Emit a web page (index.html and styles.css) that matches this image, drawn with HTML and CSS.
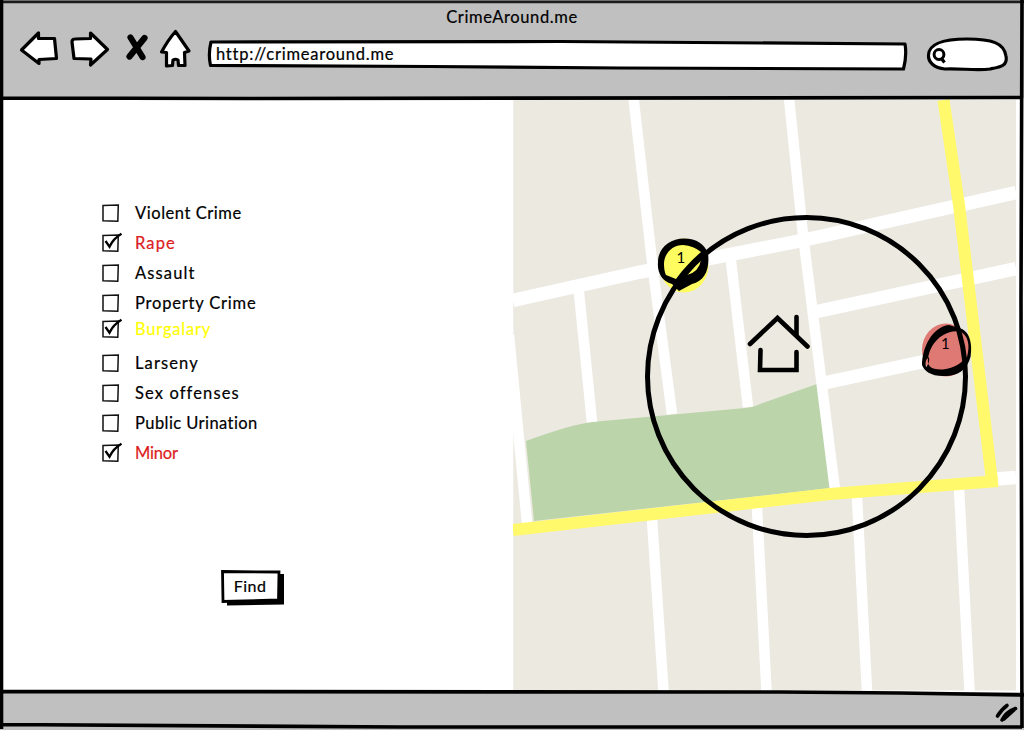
FILE: index.html
```html
<!DOCTYPE html>
<html lang="en">
<head>
<meta charset="utf-8">
<title>CrimeAround.me</title>
<link rel="stylesheet" href="styles.css">
</head>
<body>
<div class="window">
  <header class="header">
    <h1 class="title">CrimeAround.me</h1>
    <nav class="toolbar">
      <svg class="ink back" viewBox="19 29 41 40"><path d="M21.500 50 38.500 33 38.500 38.500 54.500 38.500 56.500 58.500 39 59.500 39 63.500Z"/></svg>
      <svg class="ink forward" viewBox="69 29 41 40"><path d="M72 42Q72 39 75 39L90.500 38.500 90.500 33 107.500 49.500 90.500 65 91 59 74 58.500Z"/></svg>
      <svg class="stop" viewBox="125 31 25 32"><path d="M130.500 37.500 142.500 57M144.500 38 129.500 56.500"/></svg>
      <svg class="ink home" viewBox="158 28 35 42"><path d="M175.500 31.500 189 51 184.500 52.500 185 65.500 178.500 65.500 178 60Q175.500 58.500 173 60L172.500 65.500 166.500 66 166.500 52.500 161.500 52Q168 40 175.500 31.500Z"/></svg>
      <div class="address">
        <svg class="ink address-shape" viewBox="205 38 704 34"><path d="M211 42 560 41.500 905 44Q907 55 903.500 69L620 68 430 66.500 210.500 65.500Q208 54 211 42Z"/></svg>
        <span class="url">http://crimearound.me</span>
      </div>
      <svg class="ink search" viewBox="925 36 85 37"><path d="M928.500 55C929 43 945 39 967 39C992 39 1004 43 1006 56C1008 66 1000 67 990 69C977 71 958 68 945 69C934 68 928 62 928.500 55Z"/><circle class="lens" cx="939" cy="54.500" r="4.900"/><path class="handle" d="M941 58 944.500 62.500"/></svg>
    </nav>
  </header>

  <main class="main">
    <form class="filters">
      <svg width="0" height="0" class="defs">
        <symbol id="box" viewBox="0 0 22 22"><path class="box-line" d="M2 3.500 17.300 3 16.800 19.300 2 18.700Z"/></symbol>
        <symbol id="checked" viewBox="0 0 22 22"><path class="box-line" d="M2 3.500 17.300 3 16.800 19.300 2 18.700Z"/><path class="tick" d="M4.500 9 8.500 14.700C11 9.500 15 5 20.500 1.800"/></symbol>
      </svg>
      <ul class="list">
        <li class="row"><svg class="check"><use href="#box"/></svg><span class="label">Violent Crime</span></li>
        <li class="row red"><svg class="check"><use href="#checked"/></svg><span class="label wide">Rape</span></li>
        <li class="row"><svg class="check"><use href="#box"/></svg><span class="label wide">Assault</span></li>
        <li class="row"><svg class="check"><use href="#box"/></svg><span class="label medium">Property Crime</span></li>
        <li class="row yellow"><svg class="check"><use href="#checked"/></svg><span class="label medium">Burgalary</span></li>
        <li class="row"><svg class="check"><use href="#box"/></svg><span class="label wide">Larseny</span></li>
        <li class="row"><svg class="check"><use href="#box"/></svg><span class="label wide">Sex offenses</span></li>
        <li class="row"><svg class="check"><use href="#box"/></svg><span class="label snug">Public Urination</span></li>
        <li class="row red"><svg class="check"><use href="#checked"/></svg><span class="label tight">Minor</span></li>
      </ul>
      <button class="find" type="button">
        <svg class="find-shape" viewBox="219 568 67 39"><path d="M227 574H284V604.500L227 605.500Z"/><path class="face" d="M222.500 571.500 279 572 278.500 600 223 601.500Z"/></svg>
        <span class="find-text">Find</span>
      </button>
    </form>

    <svg class="map" viewBox="513 98 504 594">
      <path class="land" d="M513.300 100H1016V690.500H513.300Z"/>
      <path class="park" d="M526 441C546 434 570 425 592 422L745 408Q754 407 760 404L817 384 831 488 534 521Z"/>
      <g class="roads">
        <path d="M513 300.500 640 272 800 241 1016 192.500"/>
        <path d="M817 311.500 1016 268.500"/>
        <path d="M824 383 940 358"/>
        <path d="M633.500 98 653 270 672 414"/>
        <path d="M789 98 803 235 835 490"/>
        <path d="M578.500 288 592 422"/>
        <path d="M730.500 257 748 407"/>
        <path d="M509 335 527 523"/>
        <path d="M652 520 663.500 691"/>
        <path d="M757 508 766.500 691"/>
        <path d="M857 498 867 691"/>
        <path d="M959 488 969.500 691"/>
        <path class="spur" d="M996 479 1016 477.500"/>
      </g>
      <path class="right-edge" d="M1016 98H1017V692H1016Z"/>
      <path class="highway" d="M943.500 100 959 205 992 481M513 530 830 494 998 481"/>
      <ellipse class="yellow-spot" cx="684" cy="265.500" rx="24.500" ry="27"/>
      <ellipse class="red-spot" cx="946" cy="350" rx="24" ry="26.500"/>
      <path class="pin" d="M684 238.500C697 238.500 704 244 708 253C710 269 705 281 692 284L679 291 672 284C661 281 657 271 658 262C658 248 670 238.500 684 238.500ZM683 245C672 245 664 254 664 264Q664 271 666 275L676 279C684 268 692 260 701 252Q694 246 683 245ZM701 260Q690 266 687 275Q699 272 701 260Z"/>
      <path class="pin" d="M922 365C922 348 932 327 949 325L959 328C969 330 973 343 970.500 357C967 370 957 376 946 376C932 377 924 371 922 365ZM928 359C927 366 931 370 943 369.500C955 368 961 363 967 357C970 346 969 335 959 331C941 331 930 344 928 359ZM925.500 363Q926 359 929 357Q930 363 926 367Z"/>
      <circle class="radius" cx="806.500" cy="376.500" r="159"/>
      <g class="house">
        <path d="M750 344 777.500 318 807.500 346.500"/>
        <path d="M796.500 317V335"/>
        <path d="M760.500 350 760 370H796.500V352"/>
      </g>
      <text class="count" x="676.500" y="263">1</text>
      <text class="count" x="941" y="348.500">1</text>
    </svg>
  </main>

  <footer class="footer">
    <svg class="grip" viewBox="994 701 26 22"><path d="M997.500 716Q1002 709 1007 705.500M1002 720Q1006 712 1015.500 708.500M1004 719 1014 710"/></svg>
  </footer>
  <svg class="frame" viewBox="0 0 1024 730">
    <path class="top" d="M0 1.800H1024"/>
    <path d="M1.500 0V729M2 98 250 98.500 1022 97.500M2 691.500 780 692 900 693 1024 695M2 724.500 400 727 1022 727"/>
    <path d="M1022 0 1021 300 1022 728"/>
  </svg>
</div>
</body>
</html>
```
FILE: styles.css
```css
* { box-sizing: border-box; }
body { margin: 0; background: #fff; color: #000; font-family: Lato, "Open Sans", sans-serif; }
.window { position: relative; width: 1024px; height: 730px; display: flex; flex-direction: column; overflow: hidden; }
.frame { position: absolute; inset: 0; width: 1024px; height: 730px; pointer-events: none; }
.frame path { fill: none; stroke: #000; stroke-width: 3.6; }
.frame .top { stroke: #1c1c1c; stroke-width: 2.8; }

.header { height: 98px; background: #c0c0c0; display: flex; flex-direction: column; }
.title { margin: 0; height: 28px; padding-top: 7px; text-align: center; font-size: 16.5px; line-height: 21px; font-weight: 400; letter-spacing: 0.6px; -webkit-text-stroke: 0.2px; }
.toolbar { display: flex; align-items: flex-start; padding-left: 19px; }
.toolbar svg { display: block; flex: none; }
.ink path { fill: #fff; stroke: #000; stroke-width: 3.2; stroke-linejoin: round; }
.back { width: 41px; height: 40px; margin-top: 1px; }
.forward { width: 41px; height: 40px; margin: 1px 0 0 9px; }
.stop { width: 25px; height: 32px; margin: 3px 0 0 15px; }
.stop path { fill: none; stroke: #000; stroke-width: 6.2; stroke-linecap: round; }
.home { width: 35px; height: 42px; margin-left: 8px; }
.address { position: relative; width: 704px; height: 34px; margin: 10px 0 0 12px; padding: 6px 0 0 11px; }
.address-shape { position: absolute; inset: 0; width: 704px; height: 34px; }
.url { position: relative; display: block; font-size: 16.5px; line-height: 21px; letter-spacing: 0.78px; -webkit-text-stroke: 0.2px; }
.search { width: 85px; height: 37px; margin: 8px 0 0 16px; }
.search .lens { fill: none; stroke: #000; stroke-width: 3; }
.search .handle { stroke-width: 3.2; }

.main { height: 594px; display: grid; grid-template-columns: 513px 504px; }
.filters { padding: 100px 0 0 101px; display: flex; flex-direction: column; align-items: flex-start; }
.defs { position: absolute; }
.list { margin: 0; padding: 0; list-style: none; }
.row { display: flex; align-items: center; height: 30px; gap: 12px; }
.check { width: 22px; height: 22px; }
.label { font-size: 16.5px; line-height: 22px; padding-bottom: 1px; white-space: nowrap; letter-spacing: 0.55px; -webkit-text-stroke: 0.2px; }
.wide { letter-spacing: 1.12px; }
.medium { letter-spacing: 0.8px; }
.snug { letter-spacing: 0.43px; }
.tight { letter-spacing: -0.2px; }
.box-line { fill: #fff; stroke: #111; stroke-width: 1.5; }
.tick { fill: none; stroke: #000; stroke-width: 2.3; }
.red .label { color: #dc1c1c; }
.yellow { height: 22px; margin-bottom: 8px; }
.yellow .label { color: #ff0; }
.find { position: relative; width: 67px; height: 39px; margin: 100px 0 0 118px; padding: 0 5px 3px 0; border: 0; background: none; font: 16px/20px Lato, sans-serif; color: #000; letter-spacing: 0.5px; -webkit-text-stroke: 0.2px; }
.find-shape { position: absolute; inset: 0; width: 67px; height: 39px; }
.find-shape .face { fill: #fff; stroke: #000; stroke-width: 2.8; }
.find-text { position: relative; }

.map { display: block; width: 504px; height: 594px; }
.land { fill: #ece9e1; }
.park { fill: #bbd4aa; }
.roads path { fill: none; stroke: #fff; stroke-width: 10.5; }
.roads path:nth-child(-n+3) { stroke-width: 13.5; }
.roads .spur { stroke-width: 13.5; }
.right-edge { fill: #fff; }
.highway { fill: none; stroke: #fff96b; stroke-width: 12; }
.yellow-spot { fill: #fffc60; }
.red-spot { fill: #df7974; }
.pin { fill: #000; fill-rule: evenodd; }
.radius { fill: none; stroke: #000; stroke-width: 5; }
.house path { fill: none; stroke: #000; stroke-width: 4.6; stroke-linecap: round; }
.count { font: 15px Lato, sans-serif; }

.footer { height: 38px; padding: 9px 4px 0 0; background: #c0c0c0; display: flex; justify-content: flex-end; }
.grip { width: 26px; height: 22px; }
.grip path { fill: none; stroke: #000; stroke-width: 3.6; stroke-linecap: round; }
```
